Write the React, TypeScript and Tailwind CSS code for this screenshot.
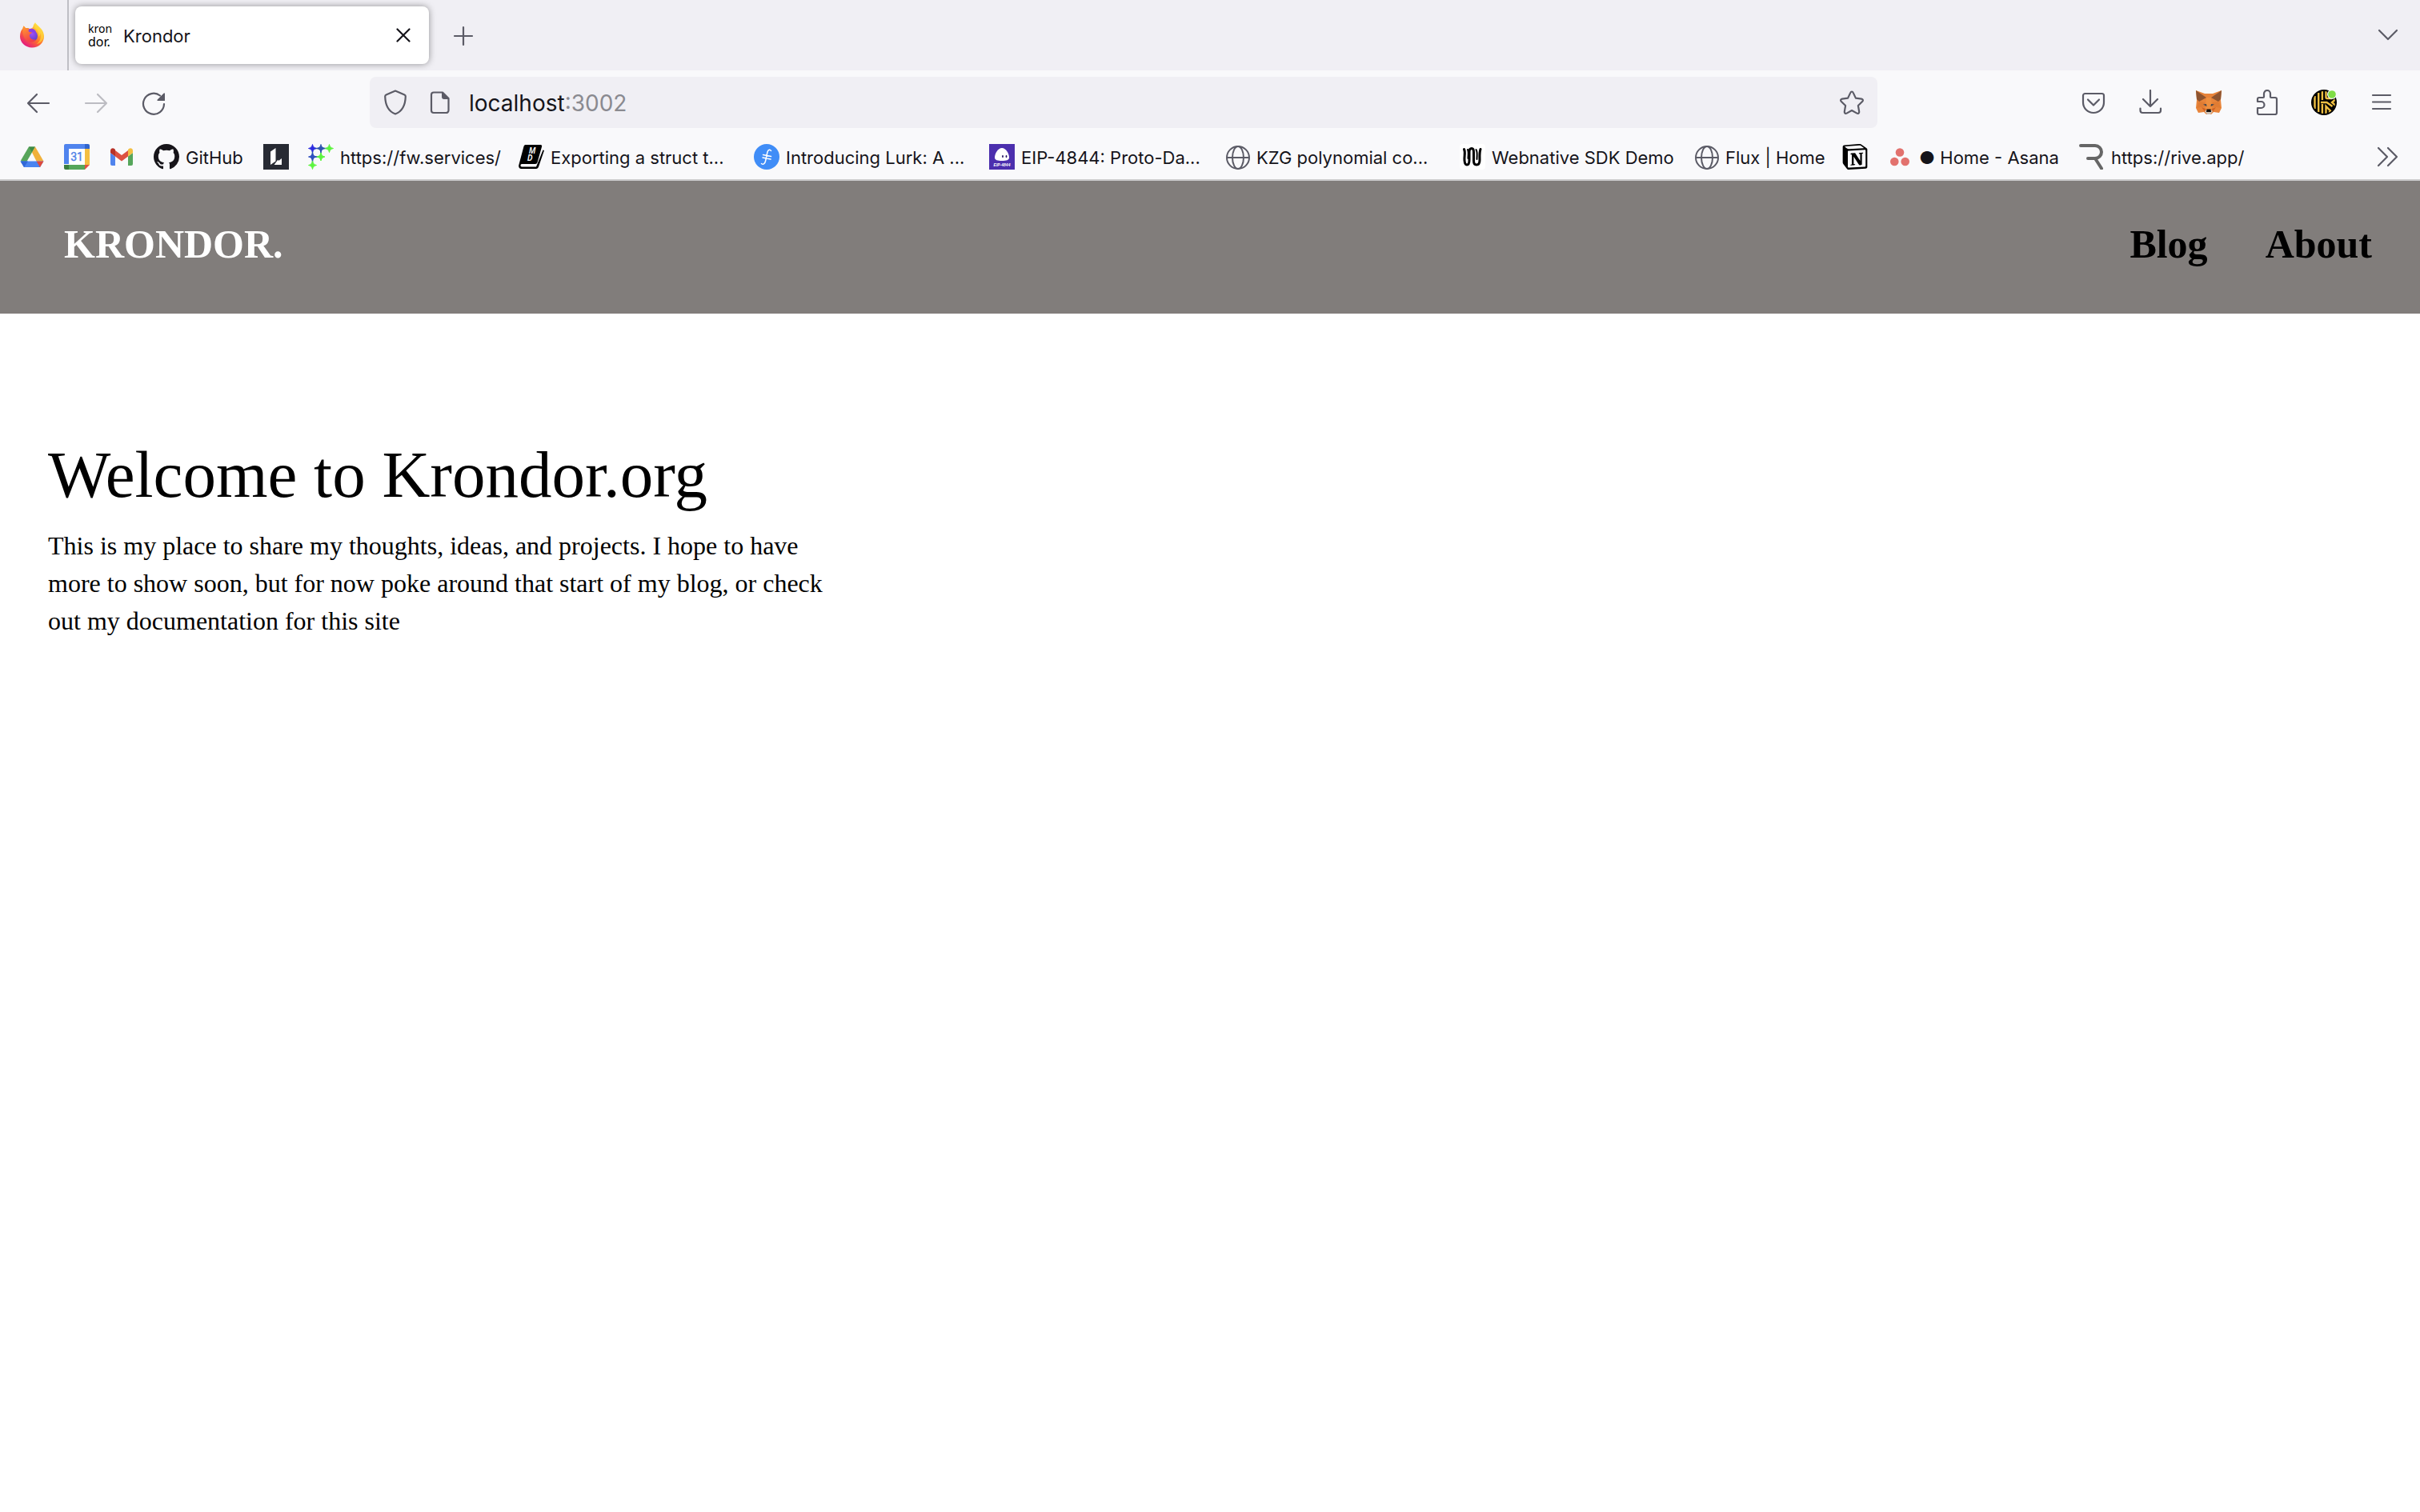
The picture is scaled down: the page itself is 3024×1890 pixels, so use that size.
import type { ReactNode } from "react";
import { SiNotion } from "react-icons/si";

const stroke = {
  fill: "none",
  stroke: "currentColor",
  strokeWidth: 2.2,
  strokeLinecap: "round" as const,
  strokeLinejoin: "round" as const,
};

function Icon({ children }: { children: ReactNode }) {
  return (
    <svg viewBox="0 0 32 32" className="size-8 shrink-0" aria-hidden="true">
      {children}
    </svg>
  );
}

function IconButton({ label, disabled, children }: { label: string; disabled?: boolean; children: ReactNode }) {
  return (
    <button type="button" aria-label={label} disabled={disabled} className="shrink-0 text-[#5b5b66] disabled:text-[#bcbcc2]">
      <Icon>{children}</Icon>
    </button>
  );
}

function FirefoxLogo() {
  return (
    <Icon>
      <defs>
        <linearGradient id="ff-body" x1="0.85" y1="0.1" x2="0.25" y2="0.95">
          <stop offset="0" stopColor="#fff14f" />
          <stop offset="0.3" stopColor="#ffb02e" />
          <stop offset="0.6" stopColor="#ff6a2f" />
          <stop offset="1" stopColor="#e3197f" />
        </linearGradient>
        <radialGradient id="ff-globe" cx="0.5" cy="0.3" r="0.8">
          <stop offset="0" stopColor="#a44df5" />
          <stop offset="1" stopColor="#4a3fc4" />
        </radialGradient>
        <linearGradient id="ff-left" x1="0.2" y1="0" x2="0.6" y2="1">
          <stop offset="0" stopColor="#ff9a30" />
          <stop offset="1" stopColor="#f23a4b" />
        </linearGradient>
      </defs>
      <path
        d="M20 0c1 2 3 3.500 5 5.500 3.500 3 6 7 6 12C31 25.500 24.500 31.500 16 31.500S1 25 1 17.500C1 13 2.500 9.500 4.500 7.500l.8-3c.8.3 2 1.500 2.600 2.700C10 6.800 12 7.300 13 8c1 .5 4-1 4.500-3C17.800 3 18.800 1.500 20 0z"
        fill="url(#ff-body)"
      />
      <circle cx="16" cy="17" r="7" fill="url(#ff-globe)" />
      <path
        d="M4.500 7.500l.8-3c.8.3 2 1.500 2.600 2.700 2-.3 4 .2 4.600 1.300-.5 1.500-1 2.800.5 3.200 1.500.3 3 .3 3 1s-3 1.800-3.200 3.200c.2 4 4 6.500 8 5.500-2.500 3.500-7.500 4-11 1.500C5.500 20 4 14 4.500 7.500z"
        fill="url(#ff-left)"
      />
      <path d="M12 8.500c2.500-1.500 6-1 8 1.500 1.500 2 1.500 3.500.5 4.500-1-2-3.500-2.500-5-2.300L12.500 12c-1-1-1-2.300-.5-3.500z" fill="#8b3fe8" />
      <path d="M19 7c4 1.500 6 6 5 11 1.800-1.500 2.500-3 2.500-5 1.500 5 0 11-5 14 6-1 9-6 9-10.500C30 10 24 8 21 2c-1.500 1.500-2 3-2 5z" fill="#ffd93b" opacity="0.65" />
    </Icon>
  );
}

function DriveIcon() {
  return (
    <Icon>
      <path d="M12 3.500h8L16 10.500 7 26 2 20.500z" fill="#57a55a" />
      <path d="M12 3.500h8l-4 7z" fill="#3e8a45" />
      <path d="M20 3.500l10.500 18H21.500L16 10.500z" fill="#f0b13c" />
      <path d="M1.500 21.500h29L26 29H6z" fill="#4a84f0" />
      <path d="M1.500 21.500H11L6 29z" fill="#3268d8" />
      <path d="M21.500 21.500h9L26 29z" fill="#df4a3c" />
    </Icon>
  );
}

function CalendarIcon() {
  return (
    <Icon>
      <path d="M2 0h24v7H7v18H0V2a2 2 0 0 1 2-2z" fill="#5084ee" />
      <path d="M26 0h4a2 2 0 0 1 2 2v4h-6z" fill="#3165cd" />
      <path d="M26 6h6v20h-6z" fill="#f3bf42" />
      <path d="M6 26h20v6H6z" fill="#56a65b" />
      <path d="M0 26h6v6H2a2 2 0 0 1-2-2z" fill="#3c7e40" />
      <path d="M26 26h6l-6 6z" fill="#df5142" />
      <path d="M6 6h20v20H6z" fill="#fff" />
      <text x="16" y="21" textAnchor="middle" fontSize="14" fontFamily="Roboto, sans-serif" fill="#4f82e8" stroke="#4f82e8" strokeWidth="0.4">
        31
      </text>
    </Icon>
  );
}

function GmailIcon() {
  return (
    <Icon>
      <path d="M2 11l6 4.500V27H4a2 2 0 0 1-2-2z" fill="#5084ee" />
      <path d="M24 15.500l6-4.500v14a2 2 0 0 1-2 2h-4z" fill="#56a65b" />
      <path d="M8 8l8 6 8-6v7.500L16 21.500 8 15.500z" fill="#dc5142" />
      <path d="M2 8.500C2 5.500 5 4.500 7 6l1 1v8.500L2 11z" fill="#b83228" />
      <path d="M30 8.500c0-3-3-4-5-2.500l-1 1v8.500l6-4.500z" fill="#f3bf42" />
    </Icon>
  );
}

function GitHubIcon() {
  return (
    <svg viewBox="0 0 16 16" className="size-8 shrink-0" aria-hidden="true">
      <path
        fill="#17151a"
        d="M8 0C3.58 0 0 3.58 0 8c0 3.540 2.290 6.530 5.470 7.590.4.07.55-.17.55-.38 0-.19-.01-.82-.01-1.490-2.010.37-2.530-.49-2.690-.94-.09-.23-.48-.94-.82-1.130-.28-.15-.68-.52-.01-.53.63-.01 1.080.58 1.230.82.72 1.210 1.870.87 2.330.66.07-.52.28-.87.51-1.070-1.780-.2-3.640-.89-3.640-3.950 0-.87.31-1.590.82-2.150-.08-.2-.36-1.020.08-2.120 0 0 .67-.21 2.200.82.64-.18 1.320-.27 2-.27s1.360.09 2 .27c1.530-1.040 2.200-.82 2.200-.82.44 1.100.16 1.920.08 2.120.51.56.82 1.270.82 2.150 0 3.070-1.870 3.750-3.650 3.950.29.25.54.73.54 1.480 0 1.070-.01 1.930-.01 2.200 0 .21.15.46.55.38A8.010 8.010 0 0 0 16 8c0-4.420-3.580-8-8-8Z"
      />
    </svg>
  );
}

function LatticeIcon() {
  return (
    <Icon>
      <path d="M0 0h32v32H0z" fill="#272a33" />
      <path d="M9 9.500L15.500 5v16.500L9 26z" fill="#fff" />
      <path d="M13.500 26l4.500-6 1.500.8L23 18v8z" fill="#fff" />
    </Icon>
  );
}

const stars = [
  { x: 5.5, y: 5.500, fill: "#2b2be0" },
  { x: 16, y: 5.500, fill: "#2f55b0" },
  { x: 26.500, y: 5.500, fill: "#5cf53e" },
  { x: 5.500, y: 16, fill: "#3050c0" },
  { x: 16, y: 16, fill: "#5cf53e" },
  { x: 5.500, y: 26.500, fill: "#5cf53e" },
];

function FissionIcon() {
  return (
    <Icon>
      <path d="M5.500 5.500h21M5.500 16H16M5.500 5.500v21M16 5.500V16" stroke="#3a8a86" strokeWidth="1.600" fill="none" />
      {stars.map((s) => (
        <path
          key={`${s.x}-${s.y}`}
          transform={`translate(${s.x} ${s.y})`}
          d="M0-5C.8-1.800 1.800-.8 5 0 1.800.8.8 1.800 0 5-.8 1.800-1.800.8-5 0-1.800-.8-.8-1.800 0-5z"
          fill={s.fill}
          stroke={s.fill}
          strokeWidth="1"
        />
      ))}
    </Icon>
  );
}

function MdBookIcon() {
  return (
    <Icon>
      <path d="M9 1h18c2 0 2.500 1 2 2.500L23.500 23c-.4 1.300-1.300 2-2.500 2H4c-2 0-2 3.500 0 3.500h18L30.500 7.500 32 8l-7 20.500c-.6 1.500-1.500 2.500-3 2.500H3.500C.5 31-.5 28 .5 25.500L6.500 3C7 1.600 7.800 1 9 1z" fill="#000" />
      <g fill="#fff" fontFamily="'Noto Sans', sans-serif" fontSize="10" fontStyle="italic" fontWeight="600" textAnchor="middle">
        <text x="17" y="12">M</text>
        <text x="14" y="21">D</text>
      </g>
    </Icon>
  );
}

function FilecoinIcon() {
  return (
    <Icon>
      <circle cx="16" cy="16" r="16" fill="#408df7" />
      <path d="M21.500 8.500c-1-2-3.500-2-4.500 1.500L14.500 21.500c-.8 3.500-3 4.500-5 3M11.500 13.500l10 2M11 17l10 2" fill="none" stroke="#fff" strokeWidth="1.500" strokeLinecap="round" />
    </Icon>
  );
}

function EipIcon() {
  return (
    <Icon>
      <path d="M0 0h32v32H0z" fill="#4c2fae" />
      <path d="M16 5c5 0 9 7 9 12 0 3-3.500 4-9 4s-9-1-9-4c0-5 4-12 9-12z" fill="#fff" />
      <ellipse cx="17" cy="15.500" rx="0.900" ry="1.700" fill="#2a1a66" />
      <ellipse cx="21.500" cy="15.500" rx="0.900" ry="1.700" fill="#2a1a66" />
      <text x="16" y="27.500" textAnchor="middle" fontSize="5" fontWeight="700" fontStyle="italic" fontFamily="'Liberation Sans', sans-serif" fill="#fff">
        EIP-4844
      </text>
    </Icon>
  );
}

function GlobeIcon() {
  return (
    <Icon>
      <g fill="none" stroke="#5b5b66" strokeWidth="2">
        <circle cx="17" cy="17" r="14" />
        <ellipse cx="17" cy="17" rx="7" ry="14" />
        <path d="M3 17h28" />
      </g>
    </Icon>
  );
}

function WebnativeIcon() {
  return (
    <Icon>
      <rect width="32" height="32" rx="4" fill="#fff" />
      <path
        d="M5.500 6.500c2 4 0 8 .5 14 .3 4 1 5.500 3 5.500s3-2 3-6V10c0-3 1-4.500 3-4.500s2.500 1.500 2.500 4.500v11c0 3.500 1 5 3.500 5 3 0 4-2 4-6 0-5-.5-9 1-13.500"
        fill="none"
        stroke="#000"
        strokeWidth="3"
        strokeLinecap="round"
      />
      <path d="M20.500 7c2 3 1 7 1 12M10 7c1.500 3 .5 7 .5 11" fill="none" stroke="#000" strokeWidth="2" strokeLinecap="round" />
    </Icon>
  );
}

function NotionIcon() {
  return <SiNotion className="size-8 shrink-0 text-black" aria-hidden="true" />;
}

function AsanaIcon() {
  return (
    <Icon>
      <g fill="#e2726e">
        <circle cx="16" cy="10.500" r="5.300" />
        <circle cx="9.300" cy="22" r="5.300" />
        <circle cx="22.700" cy="22" r="5.300" />
      </g>
    </Icon>
  );
}

function RiveIcon() {
  return (
    <Icon>
      <path d="M2 2h18a8 8 0 0 1 0 16h-9M20 18l8 12.500" fill="none" stroke="#666" strokeWidth="4" strokeLinecap="round" />
    </Icon>
  );
}

function FoxIcon() {
  return (
    <Icon>
      <path d="M0 1l11 4h10l11-4-1 12 1 10-3 6-7-1-3 3h-6l-3-3-7 1-3-6 1-10z" fill="#e8843a" />
      <path d="M0 1l13 9-9 5-3-3z" fill="#8e5430" />
      <path d="M32 1l-13 9 9 5 3-3z" fill="#8e5430" />
      <path d="M13 10h6l1 14h-8z" fill="#ee8f3f" />
      <path d="M4 15l7 1 2 5-7 1-5 1z" fill="#e07c33" />
      <path d="M28 15l-7 1-2 5 7 1 5 1z" fill="#e07c33" />
      <path d="M7 22l5 2-1 4z" fill="#cf6324" />
      <path d="M25 22l-5 2 1 4z" fill="#cf6324" />
      <path d="M9 18.500l4-.5.5 3z" fill="#3a4450" />
      <path d="M23 18.500l-4-.5-.5 3z" fill="#3a4450" />
      <path d="M11 27l3-2h4l3 2-3 4h-4z" fill="#cfc2b6" />
      <path d="M13.500 24.500h5l.5 3.500h-6z" fill="#17120f" />
    </Icon>
  );
}

function BeeIcon() {
  return (
    <Icon>
      <defs>
        <clipPath id="bee-disc">
          <circle cx="16" cy="16" r="14" />
        </clipPath>
      </defs>
      <circle cx="16" cy="16" r="16" fill="#000" />
      <g clipPath="url(#bee-disc)" fill="none" stroke="#efbf42" strokeWidth="2.400">
        <path d="M4.500 8v16M9.200 4v24M13.900 1v12M13.900 18v14" />
        <path d="M18.500 0v9.500q0 1.500 1.500 1.500h6M12 16h7.500l7 5M32 11l-6 5 6 5M18.500 32V21l10 10M23 31v-4" />
      </g>
      <circle cx="26" cy="6" r="6" fill="#f9f9fb" />
      <circle cx="26" cy="6" r="4.800" fill="#7fdd45" />
    </Icon>
  );
}

type Bookmark = { title: string; href: string; icon: ReactNode; text?: string; width?: string };

const bookmarks: Bookmark[] = [
  { title: "Google Drive", href: "#drive", icon: <DriveIcon /> },
  { title: "Google Calendar", href: "#calendar", icon: <CalendarIcon /> },
  { title: "Gmail", href: "#gmail", icon: <GmailIcon /> },
  { title: "GitHub", href: "#github", icon: <GitHubIcon />, text: "GitHub", width: "w-[113px]" },
  { title: "Lattice", href: "#lattice", icon: <LatticeIcon /> },
  { title: "Fission services", href: "#fw", icon: <FissionIcon />, text: "https://fw.services/", width: "w-[239px]" },
  { title: "Exporting a struct", href: "#struct", icon: <MdBookIcon />, text: "Exporting a struct t...", width: "w-[270px]" },
  { title: "Introducing Lurk", href: "#lurk", icon: <FilecoinIcon />, text: "Introducing Lurk: A ...", width: "w-[270px]" },
  { title: "EIP-4844", href: "#eip", icon: <EipIcon />, text: "EIP-4844: Proto-Da...", width: "w-[270px]" },
  { title: "KZG polynomial commitments", href: "#kzg", icon: <GlobeIcon />, text: "KZG polynomial co...", width: "w-[270px]" },
  { title: "Webnative SDK Demo", href: "#webnative", icon: <WebnativeIcon />, text: "Webnative SDK Demo", width: "w-[268px]" },
  { title: "Flux", href: "#flux", icon: <GlobeIcon />, text: "Flux | Home", width: "w-[162px]" },
  { title: "Notion", href: "#notion", icon: <NotionIcon /> },
  { title: "Asana", href: "#asana", icon: <AsanaIcon />, text: "● Home - Asana", width: "w-[216px]" },
  { title: "Rive", href: "#rive", icon: <RiveIcon />, text: "https://rive.app/", width: "w-[206px]" },
];

function TabStrip() {
  return (
    <div className="flex h-[88px] items-center bg-[#f0eff4] pr-6">
      <button type="button" aria-label="Firefox View" className="ml-6 shrink-0">
        <FirefoxLogo />
      </button>
      <div className="mr-2 ml-7 h-full w-0.5 shrink-0 bg-[#bfbfc5]" />
      <div className="flex h-[72px] w-[442px] shrink-0 items-center rounded-lg bg-white px-4 shadow-[0_0_8px_rgba(0,0,0,0.4)]">
        <span className="flex w-8 shrink-0 flex-col font-['Noto_Sans',sans-serif] text-black">
          <span className="text-[14px] leading-4">kron</span>
          <span className="text-[16px] leading-4">dor.</span>
        </span>
        <span className="ml-3 flex-1 pt-0.5 text-[22px] text-[#15141a]">Krondor</span>
        <button type="button" aria-label="Close tab" className="text-[#15141a]">
          <Icon>
            <path d="M8.500 8.500l15 15M23.500 8.500l-15 15" {...stroke} />
          </Icon>
        </button>
      </div>
      <button type="button" aria-label="New tab" className="ml-[27px] text-[#5b5b66]">
        <Icon>
          <path d="M16 6v22M5 17h22" {...stroke} />
        </Icon>
      </button>
      <div className="flex-1" />
      <IconButton label="List all tabs">
        <path d="M5 10l11 11 11-11" {...stroke} />
      </IconButton>
    </div>
  );
}

function NavBar() {
  return (
    <div className="flex h-20 items-center px-8 text-[#5b5b66]">
      <div className="flex shrink-0 gap-10">
        <IconButton label="Back">
          <path d="M29 17H3M14 6L3 17l11 11" {...stroke} />
        </IconButton>
        <IconButton label="Forward" disabled>
          <path d="M3 17h26M18 6l11 11-11 11" {...stroke} />
        </IconButton>
        <IconButton label="Reload">
          <path d="M29 18A13 13 0 1 1 24 7.500" {...stroke} />
          <path d="M30 5v8.500a.5.5 0 0 1-.5.5h-8.300a.8.8 0 0 1-.5-1.400l8-8a.8.8 0 0 1 1.300.4z" fill="currentColor" />
        </IconButton>
      </div>
      <div className="mx-[254px] flex h-16 flex-1 items-center rounded-lg bg-[#f0eff4] px-4">
        <IconButton label="Tracking protection">
          <path d="M16 1.500l11.500 5q1.300.6 1.300 2C28.500 20 24 27.500 16 30.500 8 27.500 3.500 20 3.200 8.500q0-1.400 1.300-2z" {...stroke} />
        </IconButton>
        <span className="w-6 shrink-0" />
        <IconButton label="Site information">
          <path d="M8 3.500h11l7.500 7.500v15a3 3 0 0 1-3 3H8a3 3 0 0 1-3-3v-19.500a3 3 0 0 1 3-3z" {...stroke} />
          <path d="M18.500 3.500l8 8h-6a2 2 0 0 1-2-2z" fill="currentColor" stroke="currentColor" />
        </IconButton>
        <label className="ml-5 flex flex-1 items-center pt-0.5 text-[28px] leading-9 text-[#8a8a90]">
          <input
            type="text"
            aria-label="Address"
            defaultValue="localhost"
            spellCheck={false}
            className="field-sizing-content bg-transparent p-0 text-[#15141a] outline-none"
          />
          <span>:3002</span>
        </label>
        <IconButton label="Bookmark this page">
          <path d="M16 2.500c.8 0 1.300.4 1.600 1.100l3.300 7 7.300 1c1.700.3 2.300 1.900 1.100 3.100l-5.400 5.300 1.300 7.600c.2 1.700-1.300 2.800-2.800 2L16 26l-6.400 3.600c-1.500.8-3-.3-2.800-2l1.300-7.600-5.400-5.300c-1.200-1.200-.6-2.800 1.100-3.100l7.300-1 3.300-7c.3-.7.8-1.100 1.600-1.100z" {...stroke} />
        </IconButton>
      </div>
      <div className="flex shrink-0 gap-10">
        <IconButton label="Save to Pocket">
          <path d="M5.500 5h21a2.500 2.500 0 0 1 2.500 2.500V16a13 13 0 0 1-26 0V7.500A2.500 2.500 0 0 1 5.500 5z" {...stroke} />
          <path d="M9 12.500l7 7 7-7" {...stroke} />
        </IconButton>
        <IconButton label="Downloads">
          <path d="M15 1v20M6 12l9 9 9-9M2.500 23.500V26a3 3 0 0 0 3 3h19.500a3 3 0 0 0 3-3v-2.500" {...stroke} />
        </IconButton>
        <button type="button" aria-label="MetaMask" className="shrink-0">
          <FoxIcon />
        </button>
        <IconButton label="Extensions">
          <path d="M5 15v-3a2 2 0 0 1 2-2h5a1 1 0 0 0 1-1V5a4 4 0 0 1 8 0v4a1 1 0 0 0 1 1h5a2 2 0 0 1 2 2v17a2 2 0 0 1-2 2H7a2 2 0 0 1-2-2v-6h4.500a4 4 0 0 0 0-8z" {...stroke} />
        </IconButton>
        <button type="button" aria-label="Wallet extension" className="shrink-0">
          <BeeIcon />
        </button>
        <IconButton label="Application menu">
          <path d="M5 7h22M5 15.500h22M5 24h22" {...stroke} />
        </IconButton>
      </div>
    </div>
  );
}

function BookmarksBar() {
  return (
    <nav aria-label="Bookmarks" className="flex h-14 items-center pr-6 pl-6 text-[#15141a]">
      <div className="flex min-w-0 flex-1 gap-6">
        {bookmarks.map((b) => (
          <a key={b.title} href={b.href} title={b.title} aria-label={b.title} className={`flex shrink-0 items-center gap-2 ${b.width ?? "w-8"}`}>
            {b.icon}
            {b.text && <span className="pt-0.5 text-[22px] leading-7 whitespace-nowrap">{b.text}</span>}
          </a>
        ))}
      </div>
      <IconButton label="More bookmarks">
        <path d="M4 5l11 11L4 27M16 5l11 11-11 11" {...stroke} />
      </IconButton>
    </nav>
  );
}

export default function App() {
  return (
    <div className="min-h-screen bg-white">
      <div className="border-b-2 border-[#cccccd] bg-[#f9f9fb] font-['Inter',sans-serif]">
        <TabStrip />
        <NavBar />
        <BookmarksBar />
      </div>
      <div className="font-['Liberation_Serif',serif] text-black">
        <header className="flex h-[166px] items-start justify-between bg-[#817d7b] pt-[49px] pr-[60px] pl-20 text-[50px] leading-[60px] font-bold">
          <a href="#home" className="text-white">
            KRONDOR.
          </a>
          <nav className="flex gap-[72px]">
            <a href="#blog">Blog</a>
            <a href="#about">About</a>
          </nav>
        </header>
        <main className="max-w-[1100px] px-[60px] pt-[151px]">
          <h1 className="text-[83px] leading-[100px]">Welcome to Krondor.org</h1>
          <p className="mt-4 text-[32px] leading-[47px]">
            This is my place to share my thoughts, ideas, and projects. I hope to have more to show soon, but for now poke around that start of my blog, or check out my
            documentation for this site
          </p>
        </main>
      </div>
    </div>
  );
}
